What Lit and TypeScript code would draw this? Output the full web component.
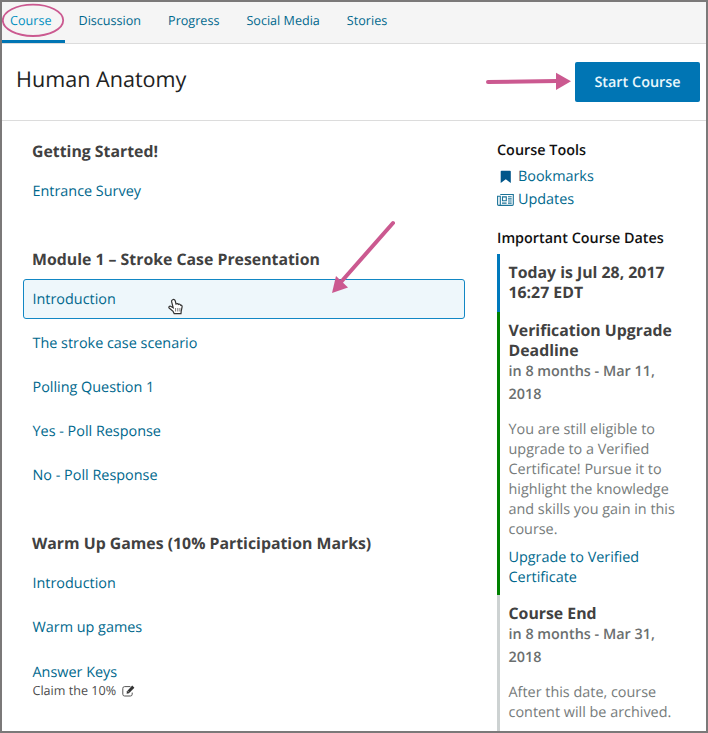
import { LitElement, html, css } from "lit";
import { customElement } from "lit/decorators.js";

const sections = [
  { title: "Getting Started!", items: [{ label: "Entrance Survey" }] },
  {
    title: "Module 1 – Stroke Case Presentation",
    items: [
      { label: "Introduction", hover: true },
      { label: "The stroke case scenario" },
      { label: "Polling Question 1" },
      { label: "Yes - Poll Response" },
      { label: "No - Poll Response" },
    ],
  },
  {
    title: "Warm Up Games (10% Participation Marks)",
    items: [{ label: "Introduction" }, { label: "Warm up games" }, { label: "Answer Keys", note: "Claim the 10%" }],
  },
] as { title: string; items: { label: string; hover?: boolean; note?: string }[] }[];

const bookmarkIcon = html`<svg class="icon" viewBox="0 0 17 14" width="17" height="14">
  <path d="M4.6 .7H12.9Q13.8 .7 13.8 1.600V13.1L8.8 9.300 3.7 13.1V1.600Q3.7 .7 4.6 .7Z" fill="#00568a" />
</svg>`;

const newsIcon = html`<svg class="icon" viewBox="0 0 17 14" width="17" height="14">
  <g fill="none" stroke="#1b7398" stroke-width="1.1">
    <path d="M3.3 1.5H16.3V11.2Q16.3 12.4 15.2 12.4H1.8Q.6 12.4 .6 11.2V3.2H3.3V11.2Q3.3 12.4 2 12.4" />
    <path d="M5.5 3.9H9.3V7.7H5.5ZM11 3.7H14.7M11 5.9H14.7M11 8H14.7M5 10.1H9.6M11 10.1H14.7" />
  </g>
</svg>`;

const editIcon = html`<svg class="edit" viewBox="0 0 13 12" width="13" height="12">
  <path d="M8.4 1.6H2.6Q.8 1.6 .8 3.4V9.2Q.8 11 2.6 11H8.4Q10.2 11 10.2 9.2V7.6" fill="none" stroke="#555" stroke-width="1" />
  <path d="M10.2.6 12.4 2.7 7 8.3 4.6 8.8 5 6.2Z" fill="#333" />
  <path d="M6 6.3 7 7.3" stroke="#fff" stroke-width=".7" />
</svg>`;

@customElement("app-root")
export class AppRoot extends LitElement {
  static styles = css`
    :host {
      display: block;
      position: relative;
      box-sizing: border-box;
      width: 708px;
      height: 733px;
      border: 2px solid #7b7979;
      background: #fff;
      overflow: hidden;
      font-family: "Open Sans", sans-serif;
      font-size: 14.4px;
      text-rendering: geometricPrecision;
      color: #00688d;
    }
    * { box-sizing: border-box; }
    nav {
      display: flex;
      gap: 13px;
      height: 42px;
      background: #f5f5f5;
      border-bottom: 1px solid #dcdcdc;
      font-size: 12.6px;
      line-height: 37px;
      white-space: nowrap;
    }
    .tab { padding: 0 7px; height: 41px; }
    .tab.active { width: 63px; padding-left: 8px; margin-right: -6.5px; color: #0090c1; border-bottom: 3px solid #0075b4; }
    header {
      display: flex;
      align-items: flex-start;
      justify-content: space-between;
      height: 77px;
      padding: 18px 6px 0 14px;
      border-bottom: 1px solid #dcdcdc;
    }
    h1 { margin: 0; font-size: 21.6px; font-weight: 400; line-height: 35px; color: #222; }
    .start {
      width: 125px;
      height: 40px;
      border-radius: 2px;
      background: #0075b4;
      color: #e9f7fc;
      font-weight: 600;
      line-height: 41px;
      text-align: center;
    }
    main { display: flex; gap: 32px; padding: 0 8px 0 21px; }
    .outline { width: 442px; }
    section { margin-bottom: 18px; }
    h2 { margin: 0; padding: 20px 0 9px 9px; font-size: 15.84px; font-weight: 700; line-height: 21px; color: #414141; }
    .item {
      height: 40px;
      margin-bottom: 4px;
      padding-left: 8.5px;
      border: 1px solid transparent;
      border-radius: 3px;
      line-height: 39px;
    }
    .item.hover { background: #eef7fb; border-color: #1287c4; }
    .item:last-child { margin-bottom: 0; }
    .item.noted { padding-top: 1px; }
    .note { display: flex; align-items: center; gap: 6px; margin-top: -10px; font-size: 12.6px; line-height: 17px; color: #4c4c4c; }
    aside { width: 201px; }
    h3 { margin: 0; font-size: 14.4px; font-weight: 600; line-height: 20px; color: #111; }
    .tools-title { padding-top: 19.5px; margin-bottom: 4.5px; }
    .tool { display: flex; align-items: center; gap: 4px; height: 23px; line-height: 23px; }
    .dates-title { margin: 17.5px 0 5.5px; }
    .date { border-left: 3px solid #cdd2d2; padding-left: 8.5px; line-height: 20px; white-space: nowrap; }
    .date.today { height: 58px; padding-top: 8px; border-color: #0079bc; }
    .date.upgrade { height: 283px; padding-top: 8px; border-color: #008100; }
    .date.end { height: 140px; padding-top: 8px; }
    .date b { display: block; font-size: 15.84px; color: #414141; }
    .when { margin-top: 1px; font-weight: 600; line-height: 22.5px; color: #6b6f6f; }
    .text { margin-top: 13.5px; color: #767b7b; }
    .link { margin-top: 8px; }
    .marks { position: absolute; left: -2px; top: -2px; pointer-events: none; }
  `;

  render() {
    return html`
      <nav>
        <div class="tab active">Course</div>
        <div class="tab">Discussion</div>
        <div class="tab">Progress</div>
        <div class="tab">Social Media</div>
        <div class="tab">Stories</div>
      </nav>
      <header>
        <h1>Human Anatomy</h1>
        <div class="start">Start Course</div>
      </header>
      <main>
        <div class="outline">
          ${sections.map(
            (s) => html`<section>
              <h2>${s.title}</h2>
              ${s.items.map(
                (i) => html`<div class="item ${i.hover ? "hover" : ""} ${i.note ? "noted" : ""}">
                  ${i.label}${i.note ? html`<div class="note"><span>${i.note}</span>${editIcon}</div>` : ""}
                </div>`
              )}
            </section>`
          )}
        </div>
        <aside>
          <h3 class="tools-title">Course Tools</h3>
          <div class="tool">${bookmarkIcon}<span>Bookmarks</span></div>
          <div class="tool">${newsIcon}<span>Updates</span></div>
          <h3 class="dates-title">Important Course Dates</h3>
          <div class="date today"><b>Today is Jul 28, 2017<br />16:27 EDT</b></div>
          <div class="date upgrade">
            <b>Verification Upgrade<br />Deadline</b>
            <div class="when">in 8 months - Mar 11,<br />2018</div>
            <div class="text">You are still eligible to<br />upgrade to a Verified<br />Certificate! Pursue it to<br />highlight the knowledge<br />and skills you gain in this<br />course.</div>
            <div class="link">Upgrade to Verified<br />Certificate</div>
          </div>
          <div class="date end">
            <b>Course End</b>
            <div class="when">in 8 months - Mar 31,<br />2018</div>
            <div class="text">After this date, course<br />content will be archived.</div>
          </div>
        </aside>
      </main>
      <svg class="marks" width="708" height="733" viewBox="0 0 708 733">
        <ellipse cx="33" cy="20.3" rx="30.2" ry="15.7" fill="none" stroke="#cb5990" stroke-width="1.8" />
        <g stroke="#cb5990" fill="#cb5990" stroke-linecap="round">
          <path d="M488 82 557 81" stroke-width="4" />
          <path d="M556 72.7V90L571 81.2Z" stroke="none" />
          <path d="M393 223 341 282" stroke-width="4" />
          <path d="M336 276 348 287.500 332 293Z" stroke="none" />
        </g>
        <path d="M172.600 299.800C174.100 298.800 175.100 300 175.400 301.500L176 304C176.900 303.300 178 303.600 178.400 304.400C179.400 303.900 180.300 304.300 180.600 305.200C181.800 304.900 182.200 305.800 182.100 306.800L181.200 311.200 181 313.700H174.200L173.100 311.400 169.100 308C168.300 307.100 169.400 305.900 170.600 306.300L173.200 307.800 171.600 301.600C171.400 300.700 171.800 300.100 172.600 299.800Z" fill="#fff" stroke="#333" stroke-width="1.2" />
        <path d="M175.600 308V311.500M177.800 308V311.500M179.900 308V311.500" stroke="#555" stroke-width=".8" />
      </svg>
    `;
  }
}
